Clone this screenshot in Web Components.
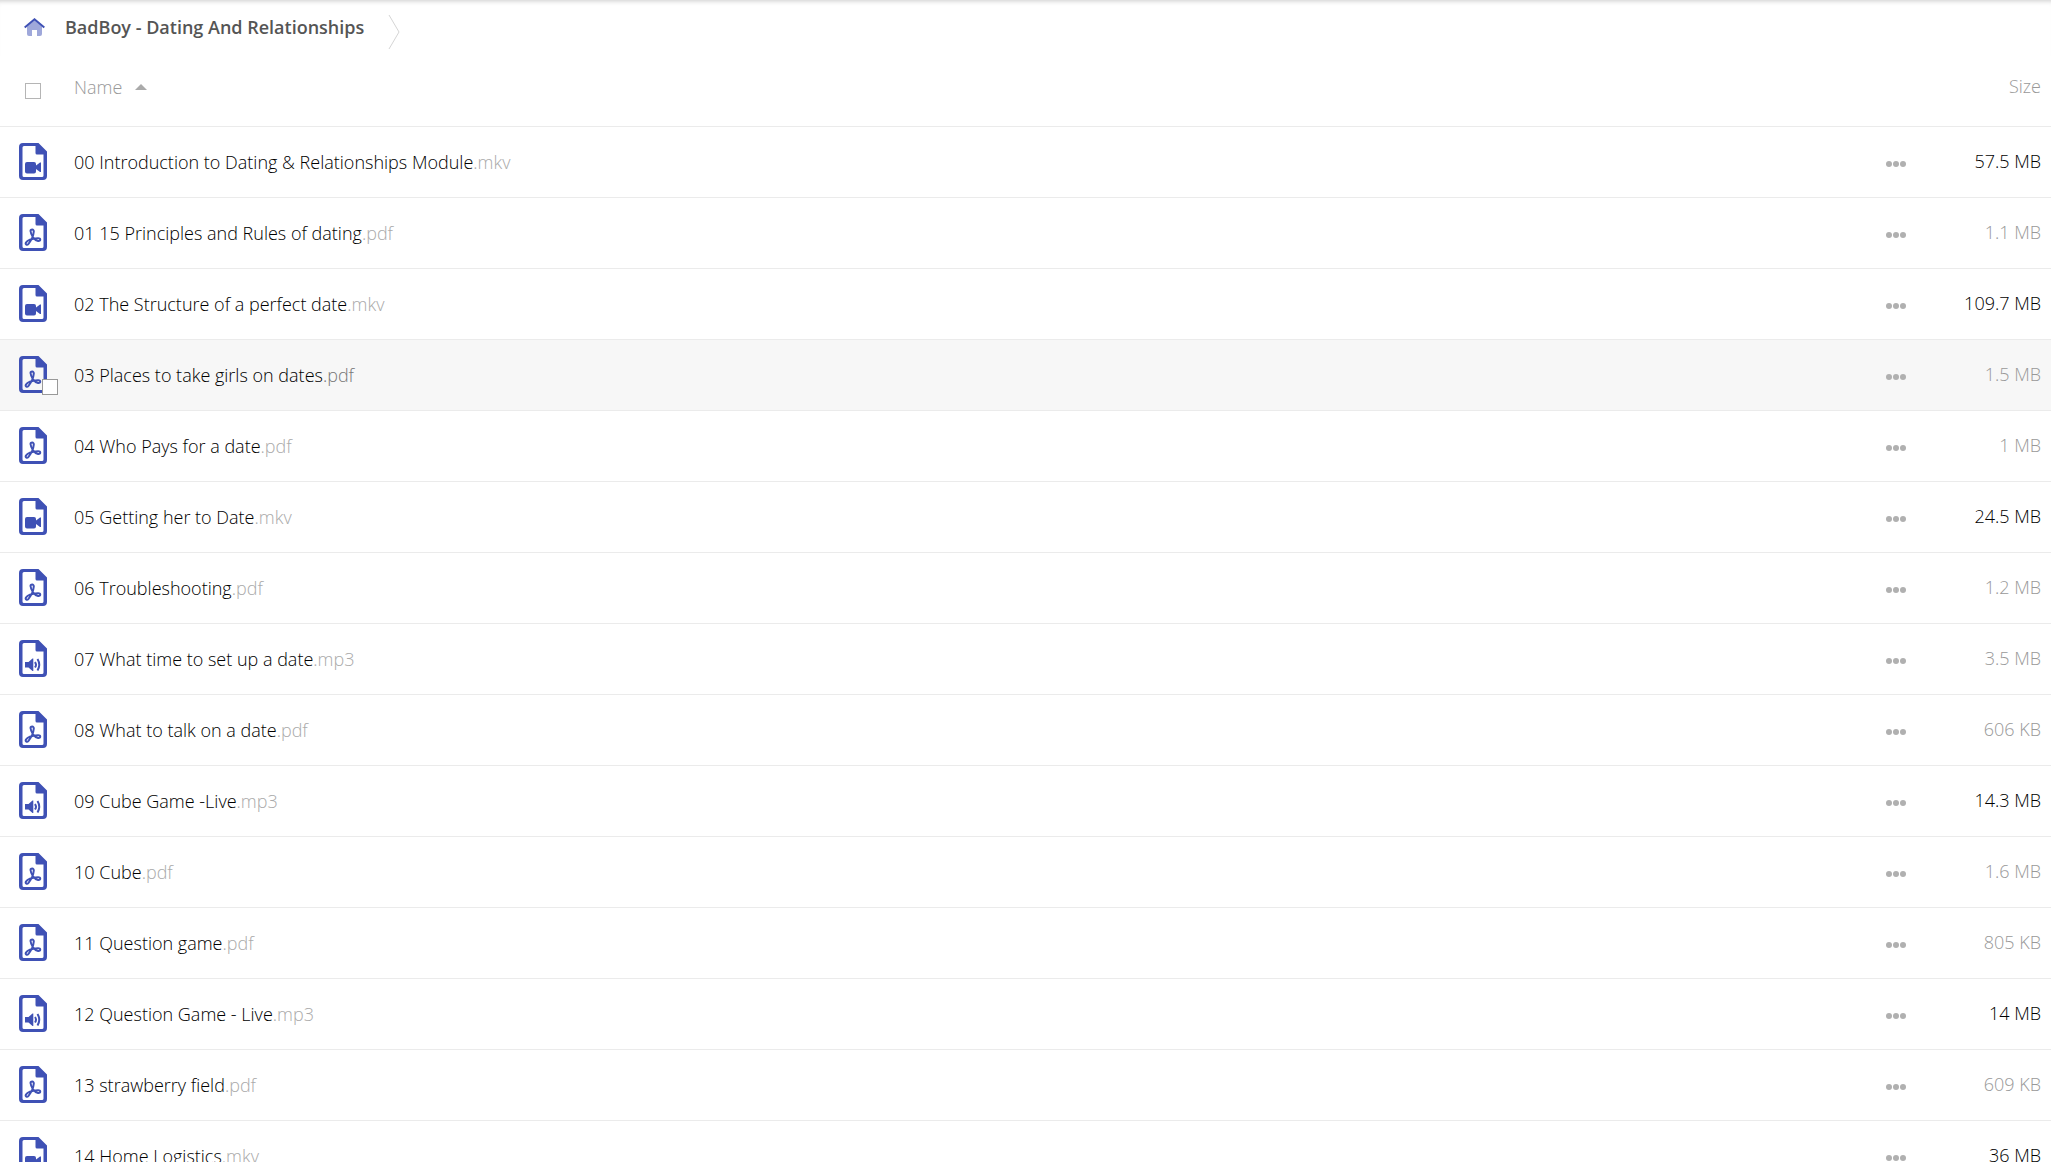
<!DOCTYPE html>
<html lang="en">
<head>
<meta charset="utf-8">
<title>Files</title>
<style>
    body {
        margin: 0;
        height: 100vh;
        overflow: hidden;
        background: #fff;
        color: #000;
        font-family: "Open Sans", "Noto Sans", sans-serif;
        font-size: 18px;
        font-weight: 300;
        line-height: 24px;
    }
</style>
</head>
<body>
<file-browser>
    <bread-crumb slot="path">BadBoy - Dating And Relationships</bread-crumb>
    <file-list></file-list>
</file-browser>

<script>
const FILES = [
    ['00 Introduction to Dating & Relationships Module', 'mkv', '57.5 MB'],
    ['01 15 Principles and Rules of dating', 'pdf', '1.1 MB'],
    ['02 The Structure of a perfect date', 'mkv', '109.7 MB'],
    ['03 Places to take girls on dates', 'pdf', '1.5 MB'],
    ['04 Who Pays for a date', 'pdf', '1 MB'],
    ['05 Getting her to Date', 'mkv', '24.5 MB'],
    ['06 Troubleshooting', 'pdf', '1.2 MB'],
    ['07 What time to set up a date', 'mp3', '3.5 MB'],
    ['08 What to talk on a date', 'pdf', '606 KB'],
    ['09 Cube Game -Live', 'mp3', '14.3 MB'],
    ['10 Cube', 'pdf', '1.6 MB'],
    ['11 Question game', 'pdf', '805 KB'],
    ['12 Question Game - Live', 'mp3', '14 MB'],
    ['13 strawberry field', 'pdf', '609 KB'],
    ['14 Home Logistics', 'mkv', '36 MB']
];

const GLYPHS = {
    mkv: `<path fill="#3f51b5" d="M8 19h7q2 0 2 2v1.500l4-3h1v9.500h-1l-4-3v2.500q0 2-2 2H8q-2 0-2-2V21q0-2 2-2z"/>`,
    pdf: `<path fill="none" stroke="#3f51b5" stroke-width="2" stroke-linejoin="round"
            d="M11.500 17C11.500 15 15 15 14.800 17.500C14.500 21 11.800 27 9.500 29.800C8 31.500 6 30.500 7 28.500C8.500 26 14 24.500 19 24.200C22 24 22 27.500 19 27C15 26.500 12 21 11.500 17z"/>`,
    mp3: `<path fill="#3f51b5" d="M6 22h3.500l4-3.500h.8v12.500h-.8L9.500 27.500H6z"/>
          <path fill="none" stroke="#3f51b5" stroke-width="2" d="M16 22q2 2.700 0 5.500M18.500 19q3.500 5.700 0 11.500"/>`
};

class FileBrowser extends HTMLElement {
    constructor() {
        super();
        this.attachShadow({ mode: 'open' });
        this.shadowRoot.innerHTML = `
            <style>
                :host { display: block; }
                header {
                    height: 56px;
                    box-shadow: inset 0 5px 5px -4px #ccc;
                }
            </style>
            <header><slot name="path"></slot></header>
            <main><slot></slot></main>
        `;
    }
}
customElements.define('file-browser', FileBrowser);

class BreadCrumb extends HTMLElement {
    constructor() {
        super();
        this.attachShadow({ mode: 'open' });
        this.shadowRoot.innerHTML = `
            <style>
                :host { display: block; }
                nav { display: flex; align-items: center; height: 56px; padding-left: 24px; box-sizing: border-box; }
                a { color: #555; text-decoration: none; font-weight: 600; }
                .home, svg { display: block; }
                .home { margin-right: 20px; }
                .home, .name { padding-bottom: 2px; }
                .arrow { margin: 8px 0 0 24px; }
            </style>
            <nav aria-label="Path">
                <a class="home" href="#" aria-label="Home">
                    <svg width="21" height="18" viewBox="0 0 21 18">
                        <path fill="#9fa8da" d="M10.500 2L3 8.500V16q0 2 2 2h3v-6h5v6h3q2 0 2-2V8.500z"/>
                        <path fill="none" stroke="#3f51b5" stroke-width="2" d="M.7 9.500L10.500 1.300l9.800 8.200"/>
                    </svg>
                </a>
                <a class="name" href="#"><slot></slot></a>
                <svg class="arrow" width="12" height="36" viewBox="0 0 12 36" aria-hidden="true">
                    <path fill="none" stroke="#d5d5d5" d="M1 1l10 17L1 35"/>
                </svg>
            </nav>
        `;
    }
}
customElements.define('bread-crumb', BreadCrumb);

class FileIcon extends HTMLElement {
    constructor() {
        super();
        this.attachShadow({ mode: 'open' });
    }

    connectedCallback() {
        this.shadowRoot.innerHTML = `
            <style>
                :host { display: block; width: 28px; height: 37px; }
                svg { display: block; }
            </style>
            <svg width="28" height="37" viewBox="0 0 28 37" aria-hidden="true">
                <path fill="#3f51b5" fill-rule="evenodd"
                    d="M4 0h15.500L28 8.500V33q0 4-4 4H4q-4 0-4-4V4q0-4 4-4zM5 3Q3.500 3 3.500 4.500V32.500Q3.500 34 5 34h18q1.500 0 1.500-1.500V11.500H18q-1.500 0-1.500-1.500V3z"/>
                ${GLYPHS[this.getAttribute('type')]}
            </svg>
        `;
    }
}
customElements.define('file-icon', FileIcon);

class TickBox extends HTMLElement {
    constructor() {
        super();
        this.attachShadow({ mode: 'open' });
    }

    connectedCallback() {
        this.shadowRoot.innerHTML = `
            <style>
                :host { display: block; width: 16px; height: 16px; }
                input {
                    appearance: none;
                    display: block;
                    box-sizing: border-box;
                    width: 16px;
                    height: 16px;
                    margin: 0;
                    border: 1px solid var(--tick-border, #aaa);
                    background: #fff;
                }
                input:checked { background: #3f51b5; }
            </style>
            <input type="checkbox" aria-label="${this.getAttribute('label')}">
        `;
    }
}
customElements.define('tick-box', TickBox);

class MoreButton extends HTMLElement {
    constructor() {
        super();
        this.attachShadow({ mode: 'open' });
        this.shadowRoot.innerHTML = `
            <style>
                :host { display: block; }
                button { display: block; padding: 8px 0; border: 0; background: none; cursor: pointer; }
                svg { display: block; }
            </style>
            <button type="button" aria-label="More actions">
                <svg width="20" height="6" viewBox="0 0 20 6" fill="#b0b0b0">
                    <circle cx="3" cy="3" r="3"/><circle cx="10" cy="3" r="3"/><circle cx="17" cy="3" r="3"/>
                </svg>
            </button>
        `;
    }
}
customElements.define('more-button', MoreButton);

class FileList extends HTMLElement {
    constructor() {
        super();
        this.attachShadow({ mode: 'open' });
        this.render();
    }

    row([name, ext, size], index) {
        const active = index === 3;
        // anything from 10 MB up is shown in black
        const large = size.endsWith('MB') && parseFloat(size) >= 10;
        return `
            <tr class="${active ? 'active' : ''}">
                <td class="pick">
                    <file-icon type="${ext}"></file-icon>
                    ${active ? `<tick-box label="Select ${name}"></tick-box>` : ''}
                </td>
                <td><a href="#">${name.replace('&', '&amp;')}<span class="ext">.${ext}</span></a></td>
                <td class="more"><more-button></more-button></td>
                <td class="size ${large ? 'large' : ''}">${size}</td>
            </tr>
        `;
    }

    render() {
        this.shadowRoot.innerHTML = `
            <style>
                :host { display: block; }
                table { width: 100%; border-collapse: separate; border-spacing: 0; table-layout: fixed; }
                th, td {
                    box-sizing: border-box;
                    height: 71px;
                    padding: 0;
                    border-bottom: 1px solid #ebebeb;
                    text-align: left;
                    vertical-align: middle;
                    font-weight: 300;
                }
                th { color: #999; padding-bottom: 8px; }
                .pick { width: 74px; padding-left: 19px; }
                td.pick { position: relative; padding-bottom: 2px; }
                th.pick { padding: 0 0 0 25px; --tick-border: #b5b5b5; }
                .more { width: 72px; }
                td.more { padding-top: 3px; }
                .size { width: 93px; padding-right: 10px; text-align: right; color: #999; }
                td.size { padding-bottom: 2px; }
                th.size { padding-bottom: 10px; }
                td.large { color: #000; }
                a { color: #000; text-decoration: none; }
                .ext { color: #aaa; }
                .active td { background: #f7f7f7; }
                .active .ext { color: #777; }
                td tick-box { position: absolute; left: 42px; top: 39px; --tick-border: #999; }
                .sort {
                    display: flex; align-items: center; gap: 13px;
                    padding: 0; border: 0; background: none;
                    color: inherit; font: inherit; cursor: pointer;
                }
            </style>
            <table>
                <thead>
                    <tr>
                        <th class="pick"><tick-box label="Select all"></tick-box></th>
                        <th aria-sort="ascending">
                            <button class="sort" type="button">Name
                                <svg width="12" height="6" viewBox="0 0 12 6" aria-hidden="true"><path fill="#aaa" d="M0 6l6-6 6 6z"/></svg>
                            </button>
                        </th>
                        <th class="more"></th>
                        <th class="size">Size</th>
                    </tr>
                </thead>
                <tbody>${FILES.map((file, i) => this.row(file, i)).join('')}</tbody>
            </table>
        `;
    }
}
customElements.define('file-list', FileList);
</script>
</body>
</html>
